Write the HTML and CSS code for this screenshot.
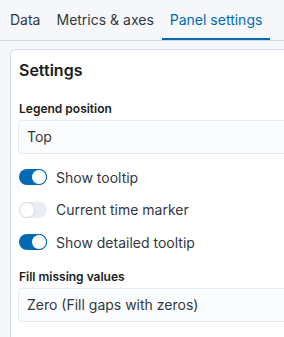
FILE: index.html
```html
<!DOCTYPE html>
<html lang="en">
<head>
<meta charset="UTF-8">
<meta name="viewport" content="width=device-width, initial-scale=1.0">
<title>Panel settings</title>
<link rel="stylesheet" href="styles.css">
</head>
<body>
<div class="tabs">
    <div class="tab">Data</div>
    <div class="tab">Metrics &amp; axes</div>
    <div class="tab active">Panel settings</div>
</div>
<div class="panel">
    <h2 class="panel-title">Settings</h2>
    <div class="form-row">
        <label class="form-label">Legend position</label>
        <div class="select">Top</div>
    </div>
    <div class="switch-list">
        <div class="switch-row">
            <span class="switch on"><span class="thumb"></span></span>
            <span class="switch-label">Show tooltip</span>
        </div>
        <div class="switch-row">
            <span class="switch"><span class="thumb"></span></span>
            <span class="switch-label">Current time marker</span>
        </div>
        <div class="switch-row">
            <span class="switch on"><span class="thumb"></span></span>
            <span class="switch-label">Show detailed tooltip</span>
        </div>
    </div>
    <div class="form-row">
        <label class="form-label">Fill missing values</label>
        <div class="select">Zero (Fill gaps with zeros)</div>
    </div>
</div>
</body>
</html>
```

FILE: styles.css
```css
body {
    font-family: Inter, "Noto Sans", sans-serif;
    background-color: #f5f7fa;
    color: #343741;
    margin: 0;
    padding: 0;
    overflow: hidden;
}
.tabs {
    display: flex;
    height: 40px;
    padding-left: 2px;
    border-bottom: 1px solid #d3dae6;
}
.tab {
    padding: 0 8px;
    line-height: 40px;
    font-size: 14px;
    color: #343741;
}
.tab.active {
    color: #006bb4;
    box-shadow: inset 0 -2px 0 #006bb4;
}
.panel {
    margin: 8px 0 0 10px;
    width: 330px;
    height: 320px;
    background-color: #fff;
    border: 1px solid #d3dae6;
    border-radius: 6px;
    padding: 8px;
}
.panel-title {
    margin: 0 0 19px;
    font-size: 16px;
    line-height: 24px;
    font-weight: 600;
    color: #1a1c21;
}
.form-label {
    display: block;
    font-size: 12px;
    line-height: 16px;
    font-weight: 600;
    color: #1a1c21;
    margin-bottom: 4px;
}
.select {
    height: 32px;
    line-height: 32px;
    padding: 0 8px;
    font-size: 14px;
    background-color: #fbfcfd;
    border-radius: 3px;
    box-shadow: 0 0 0 1px rgba(17, 43, 134, 0.1);
}
.switch-list {
    display: flex;
    flex-direction: column;
    gap: 12px;
    margin: 14px 0 16px;
}
.switch-row {
    display: flex;
    align-items: center;
    gap: 9px;
    height: 20.5px;
    font-size: 14px;
}
.switch {
    position: relative;
    width: 28px;
    height: 16px;
    border-radius: 8px;
    background-color: #e9edf3;
}
.switch.on {
    background-color: #006bb4;
}
.thumb {
    position: absolute;
    left: 0;
    top: 0;
    width: 16px;
    height: 16px;
    box-sizing: border-box;
    border-radius: 50%;
    background-color: #fff;
    border: 1px solid #d3dae6;
}
.switch.on .thumb {
    left: 12px;
    border-color: #006bb4;
}
```
